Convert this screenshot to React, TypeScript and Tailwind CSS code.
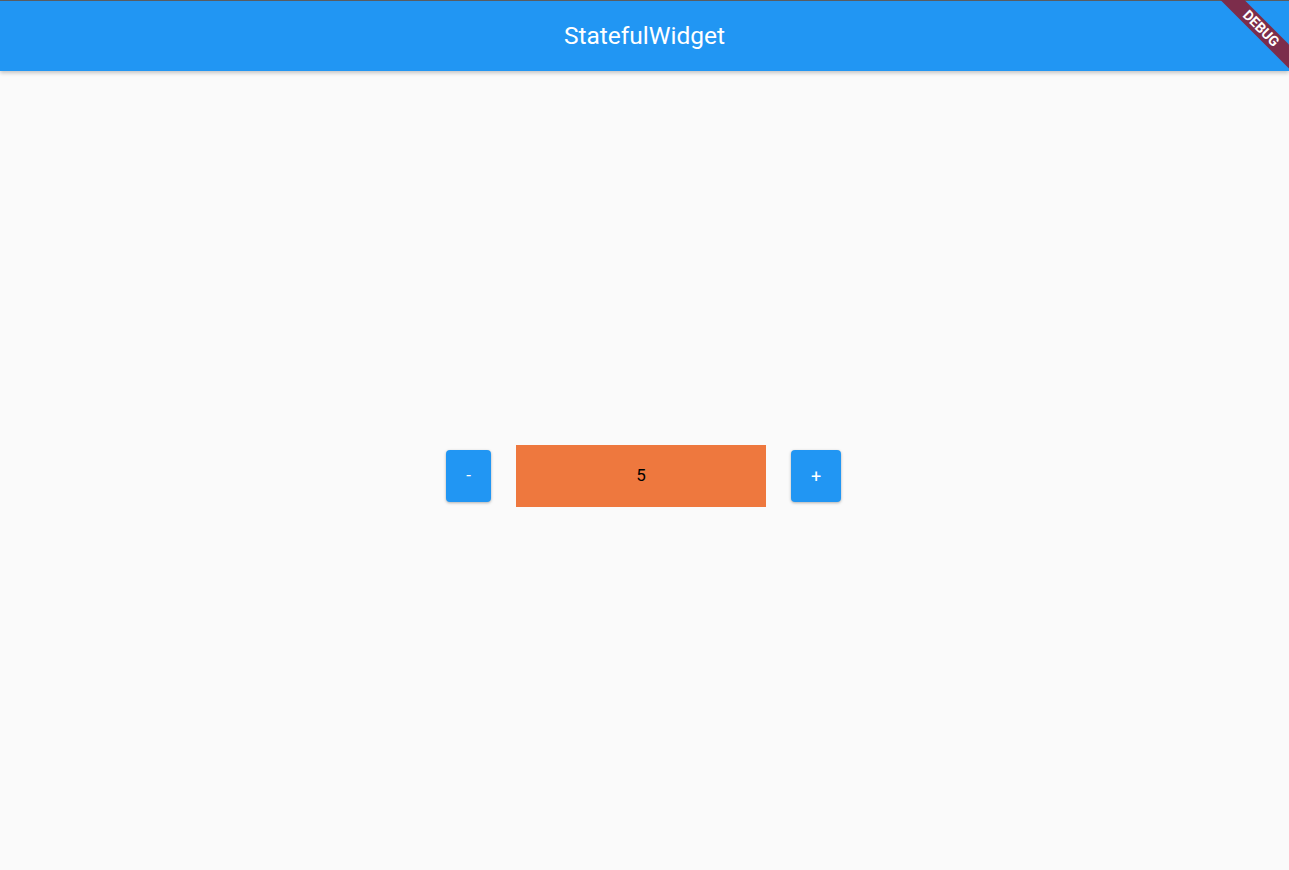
export default function App() {
  return (
    <div
      className="relative flex h-[870px] w-full flex-col overflow-hidden bg-[#fafafa]"
      style={{ fontFamily: "Roboto, 'Liberation Sans', sans-serif" }}
    >
      <div className="h-px w-full bg-[#5c5f63]" />
      <header className="relative z-10 flex h-[70px] items-center justify-center bg-[#2196f3] shadow-[0_2px_4px_rgba(0,0,0,0.22)]">
        <h1 className="text-[24.5px] font-normal text-white">StatefulWidget</h1>
      </header>

      <main className="flex flex-1 items-center justify-center pt-[11px]">
        <div className="mr-[2px] flex items-center gap-[25px]">
          <button className="flex h-[52px] w-[45px] items-center justify-center rounded-[4px] bg-[#2196f3] text-[17px] text-white shadow-[0_1px_3px_rgba(0,0,0,0.3)]">
            -
          </button>
          <div className="flex h-[62px] w-[250px] items-center justify-center bg-[#ee783e] text-[17px] text-black">
            5
          </div>
          <button className="flex h-[52px] w-[50px] items-center justify-center rounded-[4px] bg-[#2196f3] text-[18px] text-white shadow-[0_1px_3px_rgba(0,0,0,0.3)]">
            +
          </button>
        </div>
      </main>

      {/* debug banner */}
      <div className="absolute right-[-32px] top-[19.5px] z-20 flex h-[17px] w-[120px] rotate-45 items-center justify-center bg-[#7c2d4b] text-[14px] font-bold text-white">
        DEBUG
      </div>
    </div>
  );
}
